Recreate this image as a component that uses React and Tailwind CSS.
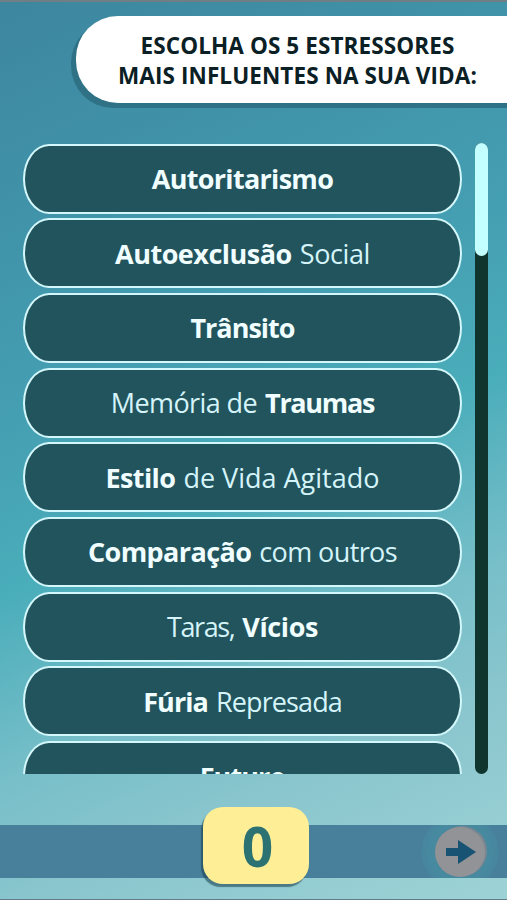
import { useState } from 'react';

const stressors = [
  { id: 1, parts: [{ text: 'Autoritarismo', bold: true, tracking: 'tracking-[-0.7px]' }] },
  {
    id: 2,
    parts: [
      { text: 'Autoexclusão', bold: true, tracking: 'tracking-[-0.5px]' },
      { text: 'Social', tracking: 'tracking-[-0.4px]' }
    ]
  },
  { id: 3, parts: [{ text: 'Trânsito', bold: true, tracking: 'tracking-[-1px]' }] },
  {
    id: 4,
    parts: [
      { text: 'Memória de', tracking: 'tracking-[-0.6px]' },
      { text: 'Traumas', bold: true, tracking: 'tracking-[-1.3px]' }
    ]
  },
  {
    id: 5,
    parts: [
      { text: 'Estilo', bold: true, tracking: 'tracking-[-0.6px]' },
      { text: 'de Vida Agitado', tracking: 'tracking-normal' }
    ]
  },
  {
    id: 6,
    parts: [
      { text: 'Comparação', bold: true, tracking: 'tracking-[-0.6px]' },
      { text: 'com outros', tracking: 'tracking-[-0.6px]' }
    ]
  },
  {
    id: 7,
    parts: [
      { text: 'Taras,', tracking: 'tracking-[-1.4px]' },
      { text: 'Vícios', bold: true, tracking: 'tracking-[-0.4px]' }
    ]
  },
  {
    id: 8,
    parts: [
      { text: 'Fúria', bold: true, tracking: 'tracking-[-0.9px]' },
      { text: 'Represada', tracking: 'tracking-[-0.9px]' }
    ]
  },
  { id: 9, parts: [{ text: 'Futuro', bold: true, tracking: 'tracking-[-0.9px]' }] }
];

function StressorButton({ parts, onClick }) {
  return (
    <button
      type="button"
      onClick={onClick}
      className="flex h-[70px] w-full shrink-0 items-center justify-center gap-[8px] whitespace-pre rounded-[26px/35px] border-2 border-[#d3f7fb] bg-[#22545d] text-[27px] leading-none text-[#d5f4fa]"
    >
      {parts.map((part) => (
        <span
          key={part.text}
          className={`${part.tracking} ${part.bold ? 'font-bold text-[#f0feff]' : 'font-normal'}`}
        >
          {part.text}
        </span>
      ))}
    </button>
  );
}

function ArrowIcon() {
  return (
    <svg viewBox="0 0 30 24" className="ml-[2px] h-6 w-[30px]" fill="#195373">
      <path d="M0 8h12V0l18 12-18 12v-8H0z" />
    </svg>
  );
}

export default function App() {
  const [selected, setSelected] = useState([]);

  function toggle(id) {
    if (selected.includes(id)) {
      setSelected(selected.filter((item) => item !== id));
    } else if (selected.length < 5) {
      setSelected([...selected, id]);
    }
  }

  return (
    <main className="flex h-[900px] w-[507px] flex-col overflow-hidden border-t-2 border-b border-t-[#707f86] border-b-[#627b8b] bg-[linear-gradient(156deg,#3e86a0_0%,#4093a9_20%,#459fb2_38%,#4aadba_53%,#78bfc9_70%,#8bc6ce_82%,#9dd3d6_100%)] font-['Open_Sans','Noto_Sans',sans-serif]">
      <header className="mt-[14px] -mr-2 ml-[76px] h-[87px] shrink-0 rounded-l-[42px] bg-white pt-[15px] pr-2 pl-[12px] text-center text-[22.5px] leading-[30px] font-bold tracking-[0.1px] text-[#0b2024] shadow-[-5px_5px_0_#2f7286]">
        <h1>ESCOLHA OS 5 ESTRESSORES<br />MAIS INFLUENTES NA SUA VIDA:</h1>
      </header>

      <section className="mt-10 ml-[23px] flex h-[631px] shrink-0 gap-[13px]">
        <div className="flex w-[439px] flex-col gap-[4.7px] overflow-hidden pt-[0.5px]">
          {stressors.map((stressor) => (
            <StressorButton key={stressor.id} parts={stressor.parts} onClick={() => toggle(stressor.id)} />
          ))}
        </div>
        <div className="h-full w-[13px] rounded-full bg-[#10352f]">
          <div className="h-[113px] rounded-full bg-[#c3ffff]" />
        </div>
      </section>

      <footer className="mt-[51px] flex h-[53px] shrink-0 items-center bg-[#48809b] pl-[203px]">
        <div className="-mt-[13px] flex h-[77px] w-[106px] shrink-0 items-center justify-center rounded-[20px] bg-[#feee96] pl-[3px] text-[55px] leading-none font-bold text-[#2c7272] shadow-[-2px_3px_1px_#1a425499]">
          {selected.length}
        </div>
        <div className="ml-[112px] flex h-[53px] w-[78px] items-center justify-center bg-[radial-gradient(circle,#47899f_0_32px,#47859e_38px,transparent_39px)]">
          <button type="button" className="mt-px flex size-[50px] items-center justify-center rounded-full bg-[#919397] shadow-[2px_-1px_1px_#7c8791]">
            <ArrowIcon />
          </button>
        </div>
      </footer>
    </main>
  );
}
